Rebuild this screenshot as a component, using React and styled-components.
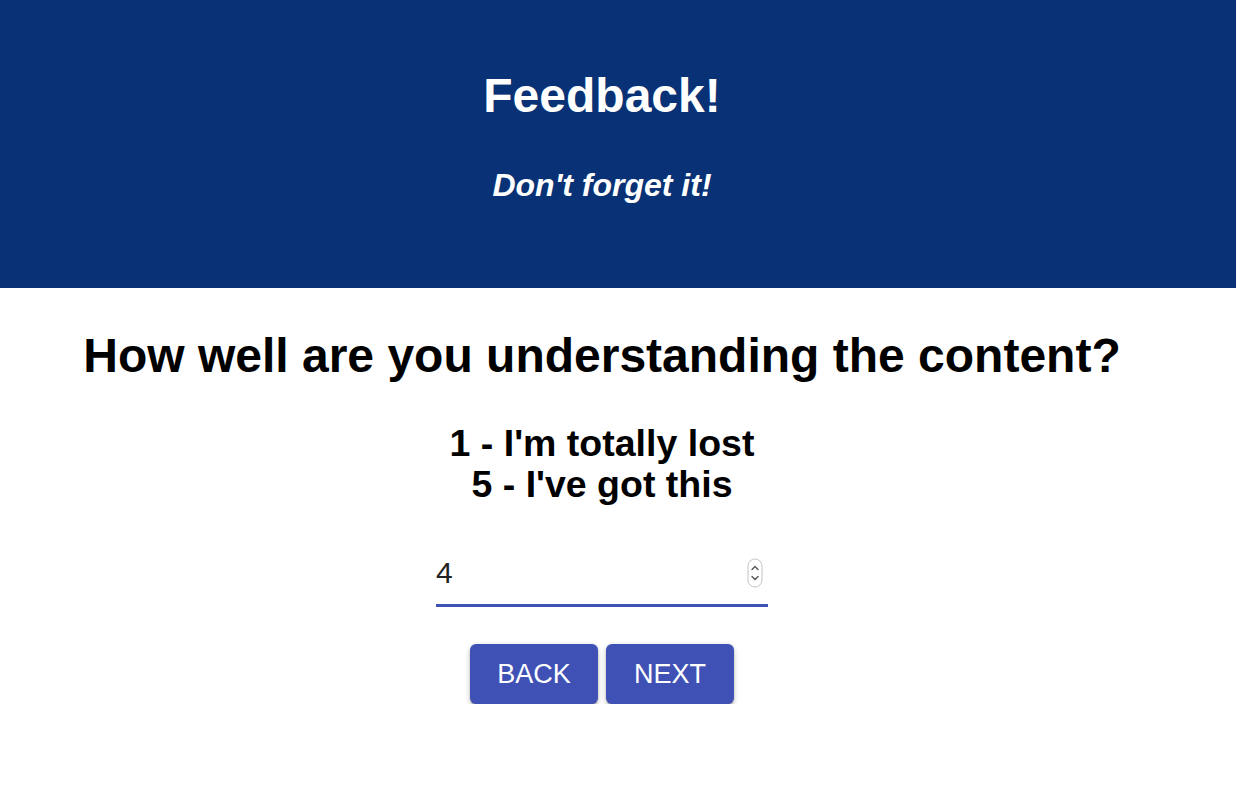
import React, { useState } from "react";
import styled, { createGlobalStyle } from "styled-components";

const Global = createGlobalStyle`
  html, body { margin: 0; padding: 0; background: #fff; }
  body { font-family: "Liberation Sans", Arial, Helvetica, sans-serif; color: #000; }
  * { box-sizing: border-box; }
`;

const Header = styled.header`
  height: 288px;
  background: #083275;
  color: #fff;
  display: flex;
  flex-direction: column;
  align-items: center;
  padding: 69px 32px 0 0;
`;

const Title = styled.h1`
  margin: 0;
  font-size: 48px;
  font-weight: 700;
  line-height: 54px;
`;

const Subtitle = styled.p`
  margin: 44px 0 0;
  font-size: 32px;
  font-weight: 700;
  font-style: italic;
  line-height: 36px;
`;

const Main = styled.main`
  display: flex;
  flex-direction: column;
  align-items: center;
  padding: 41px 32px 0 0;
`;

const Question = styled.h2`
  margin: 0;
  font-size: 48px;
  font-weight: 700;
  line-height: 54px;
  text-align: center;
`;

const Scale = styled.div`
  margin-top: 40px;
  font-size: 37.5px;
  font-weight: 700;
  line-height: 41px;
  text-align: center;
`;

const Field = styled.div`
  margin-top: 51px;
  width: 332px;
  display: flex;
  align-items: center;
  border-bottom: 3px solid #3f51b5;
  padding-bottom: 14px;
`;

const NumberInput = styled.input`
  flex: 1;
  min-width: 0;
  border: none;
  outline: none;
  background: transparent;
  padding: 0;
  font-family: "Liberation Sans", Arial, sans-serif;
  font-size: 30px;
  line-height: 34px;
  height: 34px;
  color: #222;
  -moz-appearance: textfield;
  &::-webkit-outer-spin-button,
  &::-webkit-inner-spin-button {
    -webkit-appearance: none;
    margin: 0;
  }
`;

const Spinner = styled.svg`
  flex: none;
  width: 16px;
  height: 30px;
  margin-right: 5px;
`;

const Buttons = styled.div`
  margin-top: 37px;
  display: flex;
  gap: 8px;
`;

const Button = styled.button`
  width: 128px;
  height: 60px;
  border: none;
  border-radius: 6px;
  background: #3f51b5;
  color: #fff;
  font-family: "Liberation Sans", Arial, sans-serif;
  font-size: 27px;
  font-weight: 400;
  text-transform: uppercase;
  cursor: pointer;
  box-shadow: 0 3px 1px -2px rgba(0,0,0,0.2), 0 2px 2px 0 rgba(0,0,0,0.14), 0 1px 5px 0 rgba(0,0,0,0.12), 0 3px 6px rgba(0,0,0,0.12);
`;

export default function App() {
  const [value, setValue] = useState("4");
  return (
    <>
      <Global />
      <Header>
        <Title>Feedback!</Title>
        <Subtitle>Don't forget it!</Subtitle>
      </Header>
      <Main>
        <Question>How well are you understanding the content?</Question>
        <Scale>
          1 - I'm totally lost
          <br />5 - I've got this
        </Scale>
        <Field>
          <NumberInput type="number" value={value} onChange={(e) => setValue(e.target.value)} />
          <Spinner viewBox="0 0 16 30">
            <rect x="1" y="1" width="14" height="28" rx="7" fill="#fff" stroke="#c4c4c4" strokeWidth="1" />
            <path d="M5 11.5 L8 8.5 L11 11.5" fill="none" stroke="#555" strokeWidth="1.4" strokeLinecap="round" strokeLinejoin="round" />
            <path d="M5 18.5 L8 21.5 L11 18.5" fill="none" stroke="#555" strokeWidth="1.4" strokeLinecap="round" strokeLinejoin="round" />
          </Spinner>
        </Field>
        <Buttons>
          <Button>Back</Button>
          <Button>Next</Button>
        </Buttons>
      </Main>
    </>
  );
}
